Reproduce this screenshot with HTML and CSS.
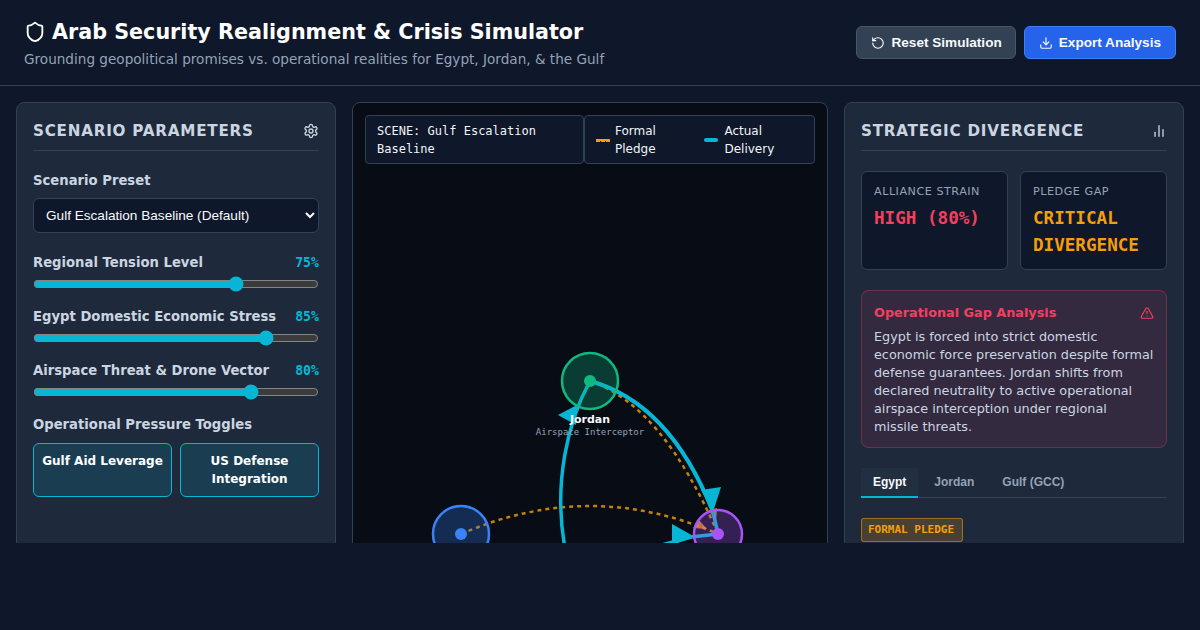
FILE: index.html
```html
<!DOCTYPE html>
<html lang="en">
  <head>
    <meta charset="UTF-8" />
    <meta name="viewport" content="width=device-width, initial-scale=1.0" />
    <title>Arab Security Realignment &amp; Crisis Simulator</title>
    <link rel="stylesheet" href="styles.css">
  </head>
  <body>
    <div class="app">
      <header class="header">
        <div>
          <h1 class="title">
            <svg class="icon icon-title" viewBox="0 0 24 24"><path d="M20 13c0 5-3.5 7.5-7.66 8.95a1 1 0 0 1-.67-.01C7.5 20.5 4 18 4 13V6a1 1 0 0 1 1-1c2 0 4.5-1.2 6.24-2.72a1.17 1.17 0 0 1 1.52 0C14.51 3.81 17 5 19 5a1 1 0 0 1 1 1z"/></svg>
            Arab Security Realignment &amp; Crisis Simulator
          </h1>
          <p class="subtitle">Grounding geopolitical promises vs. operational realities for Egypt, Jordan, &amp; the Gulf</p>
        </div>
        <div class="header-actions">
          <button class="btn btn-reset">
            <svg class="icon icon-btn" viewBox="0 0 24 24"><path d="M3 12a9 9 0 1 0 9-9 9.75 9.75 0 0 0-6.74 2.74L3 8"/><path d="M3 3v5h5"/></svg>
            Reset Simulation
          </button>
          <button class="btn btn-export">
            <svg class="icon icon-btn" viewBox="0 0 24 24"><path d="M21 15v4a2 2 0 0 1-2 2H5a2 2 0 0 1-2-2v-4"/><polyline points="7 10 12 15 17 10"/><line x1="12" y1="15" x2="12" y2="3"/></svg>
            Export Analysis
          </button>
        </div>
      </header>

      <main class="main">
        <section class="panel">
          <div class="panel-header">
            <h2 class="panel-title">Scenario Parameters</h2>
            <svg class="icon icon-panel" viewBox="0 0 24 24"><path d="M12.22 2h-.44a2 2 0 0 0-2 2v.18a2 2 0 0 1-1 1.73l-.43.25a2 2 0 0 1-2 0l-.15-.08a2 2 0 0 0-2.73.73l-.22.38a2 2 0 0 0 .73 2.73l.15.1a2 2 0 0 1 1 1.72v.51a2 2 0 0 1-1 1.74l-.15.09a2 2 0 0 0-.73 2.73l.22.38a2 2 0 0 0 2.73.73l.15-.08a2 2 0 0 1 2 0l.43.25a2 2 0 0 1 1 1.73V20a2 2 0 0 0 2 2h.44a2 2 0 0 0 2-2v-.18a2 2 0 0 1 1-1.73l.43-.25a2 2 0 0 1 2 0l.15.08a2 2 0 0 0 2.73-.73l.22-.39a2 2 0 0 0-.73-2.73l-.15-.08a2 2 0 0 1-1-1.74v-.5a2 2 0 0 1 1-1.74l.15-.09a2 2 0 0 0 .73-2.73l-.22-.38a2 2 0 0 0-2.73-.73l-.15.08a2 2 0 0 1-2 0l-.43-.25a2 2 0 0 1-1-1.73V4a2 2 0 0 0-2-2z"/><circle cx="12" cy="12" r="3"/></svg>
          </div>

          <div class="field field-preset">
            <label class="field-label">Scenario Preset</label>
            <select class="select">
              <option>Gulf Escalation Baseline (Default)</option>
            </select>
          </div>

          <div class="slider">
            <div class="slider-head">
              <span class="field-label">Regional Tension Level</span>
              <span class="slider-value">75%</span>
            </div>
            <input class="range" type="range" min="10" max="100" value="75" />
          </div>
          <div class="slider">
            <div class="slider-head">
              <span class="field-label">Egypt Domestic Economic Stress</span>
              <span class="slider-value">85%</span>
            </div>
            <input class="range" type="range" min="10" max="100" value="85" />
          </div>
          <div class="slider">
            <div class="slider-head">
              <span class="field-label">Airspace Threat &amp; Drone Vector</span>
              <span class="slider-value">80%</span>
            </div>
            <input class="range" type="range" min="10" max="100" value="80" />
          </div>

          <div class="field">
            <label class="field-label">Operational Pressure Toggles</label>
            <div class="toggles">
              <div class="toggle">Gulf Aid Leverage</div>
              <div class="toggle">US Defense Integration</div>
            </div>
          </div>
        </section>

        <section class="canvas">
          <div class="overlay">
            <div class="overlay-box scene-name">SCENE: Gulf Escalation Baseline</div>
            <div class="overlay-box legend">
              <div class="legend-item"><span class="swatch swatch-pledge"></span><span>Formal Pledge</span></div>
              <div class="legend-item"><span class="swatch swatch-delivery"></span><span>Actual Delivery</span></div>
            </div>
          </div>
          <svg class="map" viewBox="0 0 474 500">
            <!-- pledges -->
            <g class="pledge">
              <path d="M108 431 Q237 375 365 431"/>
              <path d="M237 278 Q310 303 365 431"/>
            </g>
            <polygon class="pledge-head" points="340,425 346,417 354,426"/>
            <polygon class="pledge-head" points="356,407 364,405 363,420"/>
            <!-- deliveries -->
            <g class="delivery">
              <path d="M237 278 C215 318 200 380 212 445"/>
              <path class="delivery-main" d="M237 278 Q317 300 360 409"/>
              <path d="M360 409 L365 431"/>
              <path d="M365 431 L338 434 L305 443"/>
            </g>
            <polygon class="delivery-head" points="205,312 224,302 223,322"/>
            <polygon class="delivery-head" points="348,387 368,384 360,409"/>
            <polygon class="delivery-head" points="319,421 342,434 319,442"/>
            <!-- nodes -->
            <circle class="node node-jordan" cx="237" cy="278" r="28"/>
            <circle class="dot dot-jordan" cx="237" cy="278" r="6"/>
            <circle class="node node-egypt" cx="108" cy="431" r="28"/>
            <circle class="dot dot-egypt" cx="108" cy="431" r="6"/>
            <circle class="node node-gulf" cx="365" cy="431" r="24"/>
            <circle class="dot dot-gulf" cx="365" cy="431" r="6"/>
            <text class="node-name" x="237" y="320">Jordan</text>
            <text class="node-role" x="237" y="332">Airspace Interceptor</text>
          </svg>
        </section>

        <section class="panel">
          <div class="panel-header">
            <h2 class="panel-title">Strategic Divergence</h2>
            <svg class="icon icon-panel" viewBox="0 0 24 24"><line x1="18" y1="20" x2="18" y2="10"/><line x1="12" y1="20" x2="12" y2="4"/><line x1="6" y1="20" x2="6" y2="14"/></svg>
          </div>

          <div class="metrics">
            <div class="metric">
              <div class="metric-label">Alliance Strain</div>
              <div class="metric-value metric-red">HIGH (80%)</div>
            </div>
            <div class="metric">
              <div class="metric-label">Pledge Gap</div>
              <div class="metric-value metric-amber">CRITICAL DIVERGENCE</div>
            </div>
          </div>

          <div class="alert">
            <div class="alert-head">
              <span class="alert-title">Operational Gap Analysis</span>
              <svg class="icon icon-alert" viewBox="0 0 24 24"><path d="m21.73 18-8-14a2 2 0 0 0-3.48 0l-8 14A2 2 0 0 0 4 21h16a2 2 0 0 0 1.73-3"/><path d="M12 9v4"/><path d="M12 17h.01"/></svg>
            </div>
            <p class="alert-text">Egypt is forced into strict domestic economic force preservation despite formal defense guarantees. Jordan shifts from declared neutrality to active operational airspace interception under regional missile threats.</p>
          </div>

          <div class="tabs">
            <div class="tab tab-active">Egypt</div>
            <div class="tab">Jordan</div>
            <div class="tab">Gulf (GCC)</div>
          </div>

          <span class="badge">FORMAL PLEDGE</span>
        </section>
      </main>
    </div>
  </body>
</html>
```

FILE: styles.css
```css
* {
  box-sizing: border-box;
}
body {
  margin: 0;
  background-color: #0f172a;
  color: #f8fafc;
  font-family: "DejaVu Sans", sans-serif;
}
.app {
  height: 543px;
  overflow: hidden;
}
.icon {
  fill: none;
  stroke: currentColor;
  stroke-width: 2;
  stroke-linecap: round;
  stroke-linejoin: round;
  flex-shrink: 0;
}
.header {
  height: 86px;
  padding: 0 24px;
  display: flex;
  justify-content: space-between;
  align-items: center;
  border-bottom: 1px solid #334155;
}
.title {
  margin: 2px 0 0;
  font-size: 20.7px;
  line-height: 27px;
  display: flex;
  align-items: center;
  gap: 6px;
  color: #ffffff;
}
.icon-title {
  width: 22px;
  height: 22px;
}
.subtitle {
  margin: 3px 0 0;
  font-size: 13.6px;
  line-height: 20px;
  color: #94a3b8;
}
.header-actions {
  display: flex;
  gap: 8px;
}
.btn {
  height: 33px;
  padding: 0 14px;
  display: flex;
  align-items: center;
  gap: 6px;
  border-radius: 6px;
  font-family: "Liberation Sans", Arial, sans-serif;
  font-size: 13.6px;
  font-weight: bold;
  color: #f8fafc;
}
.btn-reset {
  padding-right: 13px;
  background-color: #334155;
  border: 1px solid #475569;
}
.btn-export {
  background-color: #2563eb;
  border: 1px solid #3b82f6;
}
.icon-btn {
  width: 14px;
  height: 14px;
}
.main {
  padding: 16px;
  display: grid;
  grid-template-columns: 320px 1fr 340px;
  gap: 16px;
}
.panel {
  min-height: 560px;
  padding: 16px;
  background-color: #1e293b;
  border: 1px solid #334155;
  border-radius: 8px;
}
.panel-header {
  display: flex;
  justify-content: space-between;
  align-items: center;
  padding: 1px 0 8px;
  margin-bottom: 20px;
  border-bottom: 1px solid #334155;
}
.panel-title {
  margin: 0;
  font-size: 15.2px;
  line-height: 22px;
  letter-spacing: 0.76px;
  text-transform: uppercase;
  color: #cbd5e1;
}
.icon-panel {
  width: 16px;
  height: 16px;
  color: #cbd5e1;
}
.field-label {
  display: block;
  font-size: 13.2px;
  font-weight: bold;
  line-height: 20px;
  color: #cbd5e1;
}
.field-preset {
  margin-bottom: 20px;
}
.select {
  display: block;
  width: 100%;
  height: 35px;
  margin-top: 7px;
  padding: 0 8px;
  background-color: #0f172a;
  border: 1px solid #334155;
  border-radius: 6px;
  font-family: "Liberation Sans", Arial, sans-serif;
  font-size: 13.6px;
  color: #f8fafc;
  color-scheme: dark;
}
.slider {
  margin-bottom: 15px;
}
.slider-head {
  display: flex;
  justify-content: space-between;
  align-items: center;
  margin-bottom: 3px;
}
.slider-value {
  padding-bottom: 2px;
  font-family: "DejaVu Sans Mono", monospace;
  font-size: 13.2px;
  font-weight: bold;
  color: #06b6d4;
}
.range {
  display: block;
  width: 100%;
  height: 16px;
  margin: 0;
  accent-color: #06b6d4;
  color-scheme: dark;
}
.toggles {
  display: grid;
  grid-template-columns: 1fr 1fr;
  gap: 8px;
  margin-top: 8px;
}
.toggle {
  height: 54px;
  padding: 8px 4px;
  background-color: rgba(6, 182, 212, 0.15);
  border: 1px solid #06b6d4;
  border-radius: 6px;
  font-size: 12px;
  font-weight: bold;
  line-height: 18px;
  text-align: center;
  color: #ffffff;
}
.canvas {
  position: relative;
  min-height: 560px;
  background-color: #080c14;
  border: 1px solid #334155;
  border-radius: 8px;
}
.overlay {
  position: absolute;
  top: 12px;
  left: 12px;
  right: 12px;
  display: flex;
  justify-content: space-between;
  z-index: 2;
}
.overlay-box {
  padding: 6px 11px 5px;
  background-color: #0f172a;
  border: 1px solid #334155;
  border-radius: 4px;
  font-size: 12px;
  line-height: 18px;
  color: #f1f5f9;
}
.scene-name {
  width: 219px;
  flex-shrink: 0;
  font-family: "DejaVu Sans Mono", monospace;
}
.legend {
  width: 231px;
  display: flex;
  gap: 16px;
}
.legend-item {
  display: flex;
  align-items: center;
  gap: 5px;
}
.swatch {
  width: 14px;
  flex-shrink: 0;
}
.swatch-pledge {
  height: 3px;
  background: repeating-linear-gradient(90deg, #f59e0b 0 4px, transparent 4px 5px);
  border-top: 2px solid #f59e0b;
}
.swatch-delivery {
  height: 4px;
  margin-right: 1px;
  background-color: #06b6d4;
  border-radius: 2px;
}
.map {
  position: absolute;
  top: 0;
  left: 0;
  width: 474px;
  height: 500px;
}
.pledge path {
  fill: none;
  stroke: #f59e0b;
  stroke-width: 2.5;
  stroke-dasharray: 4 4;
  opacity: 0.8;
}
.pledge-head {
  fill: #f59e0b;
  opacity: 0.8;
}
.delivery path {
  fill: none;
  stroke: #06b6d4;
  stroke-width: 3.5;
}
.delivery .delivery-main {
  stroke-width: 4;
}
.delivery-head {
  fill: #06b6d4;
}
.node {
  stroke-width: 2.5;
}
.node-jordan {
  fill: rgba(16, 185, 129, 0.28);
  stroke: #10b981;
}
.node-egypt {
  fill: rgba(59, 130, 246, 0.28);
  stroke: #3b82f6;
}
.node-gulf {
  fill: rgba(168, 85, 247, 0.28);
  stroke: #a855f7;
}
.dot-jordan {
  fill: #10b981;
}
.dot-egypt {
  fill: #3b82f6;
}
.dot-gulf {
  fill: #a855f7;
}
.node-name {
  font-size: 11px;
  font-weight: bold;
  text-anchor: middle;
  fill: #f8fafc;
}
.node-role {
  font-family: "DejaVu Sans Mono", monospace;
  font-size: 9px;
  text-anchor: middle;
  fill: #94a3b8;
}
.metrics {
  display: grid;
  grid-template-columns: 1fr 1fr;
  gap: 12px;
  margin-bottom: 20px;
}
.metric {
  height: 99px;
  padding: 12px;
  background-color: #0f172a;
  border: 1px solid #334155;
  border-radius: 6px;
}
.metric-label {
  font-size: 11.2px;
  line-height: 16px;
  letter-spacing: 0.5px;
  text-transform: uppercase;
  color: #94a3b8;
}
.metric-value {
  margin-top: 5px;
  font-family: "DejaVu Sans Mono", monospace;
  font-size: 17.6px;
  font-weight: bold;
  line-height: 27px;
}
.metric-red {
  color: #f43f5e;
}
.metric-amber {
  color: #f59e0b;
}
.alert {
  padding: 13px 12px 11px;
  background-color: rgba(244, 63, 94, 0.1);
  border: 1px solid rgba(244, 63, 94, 0.3);
  border-radius: 8px;
  margin-bottom: 20px;
}
.alert-head {
  display: flex;
  justify-content: space-between;
  align-items: center;
  margin-bottom: 6px;
}
.alert-title {
  font-size: 12.8px;
  font-weight: bold;
  line-height: 18px;
  color: #f43f5e;
}
.icon-alert {
  width: 14px;
  height: 14px;
  color: #f43f5e;
}
.alert-text {
  margin: 0;
  font-size: 12.8px;
  line-height: 18px;
  color: #cbd5e1;
}
.tabs {
  display: flex;
  gap: 4px;
  margin-bottom: 20px;
  border-bottom: 1px solid #334155;
}
.tab {
  height: 30px;
  padding: 0 12px;
  margin-bottom: -1px;
  display: flex;
  align-items: center;
  font-family: "Liberation Sans", Arial, sans-serif;
  font-size: 12px;
  font-weight: bold;
  color: #94a3b8;
  border-bottom: 2px solid transparent;
}
.tab-active {
  background-color: #222f41;
  border-bottom-color: #06b6d4;
  color: #f8fafc;
}
.badge {
  display: inline-block;
  padding: 3px 8px 3px 6px;
  background-color: rgba(245, 158, 11, 0.2);
  border: 1px solid rgba(245, 158, 11, 0.5);
  border-radius: 3px;
  font-family: "DejaVu Sans Mono", monospace;
  font-size: 11px;
  font-weight: bold;
  line-height: 16px;
  color: #f59e0b;
}
```
